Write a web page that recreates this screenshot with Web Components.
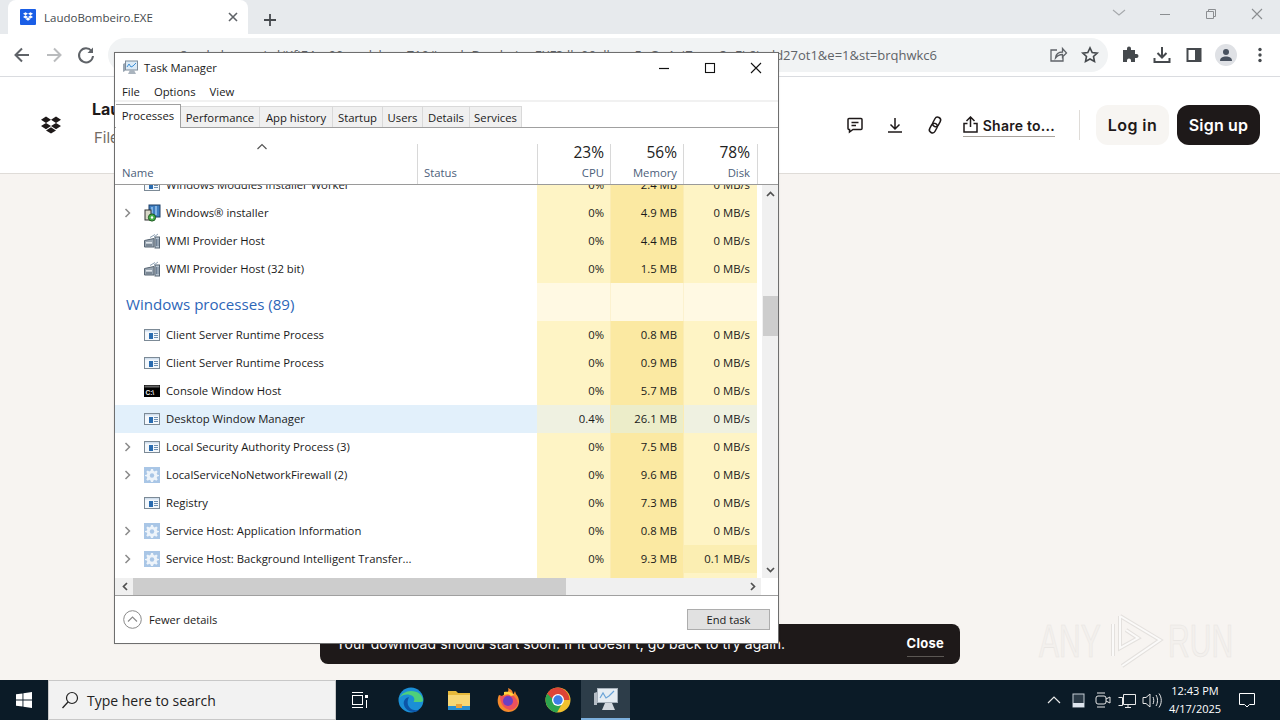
<!DOCTYPE html>
<html>
<head>
<meta charset="utf-8">
<title>LaudoBombeiro.EXE</title>
<style>
    html, body { margin: 0; padding: 0; width: 1280px; height: 720px; overflow: hidden; }
    body { display: flex; flex-direction: column; position: relative; background: #f7f4f1; font-family: "Open Sans", sans-serif; }
</style>
</head>
<body>
<browser-chrome></browser-chrome>
<site-header></site-header>
<page-area></page-area>
<win-taskbar></win-taskbar>
<task-manager>
    <tm-row icon="frame" cpu="0%" mem="2.4 MB" disk="0 MB/s">Windows Modules Installer Worker</tm-row>
    <tm-row icon="installer" expand cpu="0%" mem="4.9 MB" disk="0 MB/s">Windows® installer</tm-row>
    <tm-row icon="wmi" cpu="0%" mem="4.4 MB" disk="0 MB/s">WMI Provider Host</tm-row>
    <tm-row icon="wmi" cpu="0%" mem="1.5 MB" disk="0 MB/s">WMI Provider Host (32 bit)</tm-row>
    <tm-group>Windows processes (89)</tm-group>
    <tm-row icon="frame" cpu="0%" mem="0.8 MB" disk="0 MB/s">Client Server Runtime Process</tm-row>
    <tm-row icon="frame" cpu="0%" mem="0.9 MB" disk="0 MB/s">Client Server Runtime Process</tm-row>
    <tm-row icon="console" cpu="0%" mem="5.7 MB" disk="0 MB/s">Console Window Host</tm-row>
    <tm-row icon="frame" selected cpu="0.4%" mem="26.1 MB" disk="0 MB/s">Desktop Window Manager</tm-row>
    <tm-row icon="frame" expand cpu="0%" mem="7.5 MB" disk="0 MB/s">Local Security Authority Process (3)</tm-row>
    <tm-row icon="gear" expand cpu="0%" mem="9.6 MB" disk="0 MB/s">LocalServiceNoNetworkFirewall (2)</tm-row>
    <tm-row icon="frame" cpu="0%" mem="7.3 MB" disk="0 MB/s">Registry</tm-row>
    <tm-row icon="gear" expand cpu="0%" mem="0.8 MB" disk="0 MB/s">Service Host: Application Information</tm-row>
    <tm-row icon="gear" expand busy cpu="0%" mem="9.3 MB" disk="0.1 MB/s">Service Host: Background Intelligent Transfer...</tm-row>
    <tm-row cpu="" mem="" disk=""></tm-row>
</task-manager>

<script>
const TM_FONT = '"Open Sans", "Noto Sans", sans-serif';

const DROPBOX_PATH = 'M6 1.5 1 4.7l5 3.2 5-3.2zM16 1.5l-5 3.2 5 3.2 5-3.2zM1 11.1l5 3.2 5-3.2-5-3.2zM16 7.9l-5 3.2 5 3.2 5-3.2zM6 15.4l5 3.2 5-3.2-5-3.2z';

const PROC_ICONS = {
    frame: `<svg width="16" height="14" viewBox="0 0 16 14"><rect x=".5" y="1.500" width="15" height="11" fill="#f4f8fc" stroke="#7c8a96"/><rect x="1" y="2" width="14" height="1.500" fill="#cfdeed"/><rect x="5" y="5" width="4" height="6" fill="#2a6cb0"/><path d="M10 5.500h4M10 7.500h4M10 9.500h4" stroke="#6f8fb0"/></svg>`,
    console: `<svg width="16" height="14" viewBox="0 0 16 14"><rect x="0" y="1" width="16" height="12" fill="#000"/><rect x=".5" y="1.500" width="15" height="2" fill="#666"/><text x="1.500" y="10.500" font-family="Liberation Sans, sans-serif" font-size="6.500" font-weight="700" fill="#eee">C:\\</text></svg>`,
    gear: `<svg width="16" height="16" viewBox="0 0 16 16"><rect width="16" height="16" fill="#a9c6e6"/><path d="M7 2h2l.4 1.800 1.300.6 1.600-1 1.400 1.400-1 1.600.6 1.300L15 8v1l-1.700.5-.6 1.300 1 1.600-1.400 1.400-1.600-1-1.300.6L9 15H7l-.4-1.600-1.300-.6-1.600 1-1.400-1.400 1-1.600-.6-1.300L1 9V8l1.700-.3.6-1.300-1-1.600 1.400-1.400 1.600 1 1.300-.6z" fill="#eef4fa"/><circle cx="8" cy="8.500" r="2.200" fill="#a9c6e6"/></svg>`,
    wmi: `<svg width="16" height="16" viewBox="0 0 16 16"><path d="M.5 7.500 10 5.500V14H.5z" fill="#9aa6b2" stroke="#566472"/><rect x="2" y="9" width="6" height="1.500" fill="#e2e7ec"/><rect x="2" y="11.500" width="6" height="1" fill="#5d6b78"/><rect x="11" y="4" width="4.500" height="11" fill="#b7c4d0" stroke="#566472"/><path d="M12.500 6v7M14 6v7" stroke="#6f8094"/><path d="M6 4.500l5-3M10 4l4-3" stroke="#8fa2b4" fill="none"/></svg>`,
    installer: `<svg width="17" height="18" viewBox="0 0 17 18"><rect x="5" y="1" width="11" height="12" fill="#3f7fc1" stroke="#1f3f66"/><path d="M8 3v8M12 2v9" stroke="#9cc6ee" stroke-width="1.500"/><rect x="1" y="6" width="6" height="10" fill="#d8d8c8" stroke="#333"/><circle cx="8" cy="13.500" r="3.600" fill="#46b04a" stroke="#1d5a20"/><circle cx="8" cy="13.500" r="1.200" fill="#fff"/></svg>`
};

class BrowserChrome extends HTMLElement {
    constructor() {
        super();
        this.attachShadow({ mode: 'open' });
        this.render();
    }

    render() {
        this.shadowRoot.innerHTML = `
            <style>
                :host { display: block; flex: none; font-family: "Open Sans", sans-serif; }
                .strip { height: 34px; background: #e7eaed; display: flex; align-items: flex-end; padding-left: 8px; position: relative; }
                .tab { width: 240px; height: 34px; box-sizing: border-box; background: #fff; border-radius: 8px 8px 0 0; display: flex; align-items: center; padding: 0 10px 0 12px; gap: 8px; font-size: 11.5px; color: #45494d; }
                .tab span { flex: 1; }
                .plus { margin: 0 0 7px 15px; }
                .win { position: absolute; right: 0; top: 0; height: 30px; display: flex; align-items: center; }
                .win svg { display: block; }
                .toolbar { height: 42px; background: #fff; display: flex; align-items: center; border-bottom: 1px solid #dadce0; box-sizing: content-box; }
                .nav { width: 108px; flex: none; display: flex; align-items: center; gap: 12px; padding-left: 12px; box-sizing: border-box; }
                .omni { width: 1000px; height: 34px; flex: none; box-sizing: border-box; background: #f1f3f4; border-radius: 17px; display: flex; align-items: center; position: relative; }
                .url { width: 829px; overflow: hidden; white-space: nowrap; display: flex; justify-content: flex-end; font-size: 13px; color: #5f6368; }
                .omni .acts { position: absolute; right: 8px; top: 7px; display: flex; gap: 12px; }
                .tools { flex: 1; display: flex; align-items: center; gap: 12px; padding-left: 12px; }
                .avatar { width: 22px; height: 22px; margin-left: -1px; margin-right: 1px; border-radius: 50%; background: #dfe1e5; display: flex; align-items: center; justify-content: center; }
            </style>
            <div class="strip">
                <div class="tab">
                    <svg width="16" height="16" viewBox="0 0 16 16"><rect width="16" height="16" rx="1" fill="#1a5ee6"/><path transform="translate(2.500 2.400) scale(.5)" d="${DROPBOX_PATH}" fill="#fff"/></svg>
                    <span>LaudoBombeiro.EXE</span>
                    <svg width="10" height="10" viewBox="0 0 10 10"><path d="M1 1l8 8M9 1l-8 8" stroke="#5f6368" stroke-width="1.600"/></svg>
                </div>
                <svg class="plus" width="14" height="14" viewBox="0 0 14 14"><path d="M7 1v12M1 7h12" stroke="#45494d" stroke-width="1.800"/></svg>
                <div class="win">
                    <svg width="46" height="30" viewBox="0 0 46 30"><path d="M17 10l6 5 6-5" fill="none" stroke="#a6a9ac" stroke-width="1.100"/></svg>
                    <svg width="46" height="30" viewBox="0 0 46 30"><path d="M18 14.500h10" stroke="#8b8e91"/></svg>
                    <svg width="46" height="30" viewBox="0 0 46 30"><path d="M18.500 11.500h7v7h-7zM20.500 11.500v-2h7v7h-2" fill="none" stroke="#8b8e91"/></svg>
                    <svg width="46" height="30" viewBox="0 0 46 30"><path d="M18 9l10 10M28 9 18 19" stroke="#8b8e91" stroke-width="1.100"/></svg>
                </div>
            </div>
            <div class="toolbar">
                <div class="nav">
                    <svg width="20" height="20" viewBox="0 0 20 20"><path d="M17 10H4M10 3.500 3.500 10l6.500 6.500" fill="none" stroke="#5f6368" stroke-width="2"/></svg>
                    <svg width="20" height="20" viewBox="0 0 20 20"><path d="M3 10h13M10 3.500l6.500 6.500-6.500 6.500" fill="none" stroke="#babcbe" stroke-width="2"/></svg>
                    <svg width="20" height="20" viewBox="0 0 20 20"><path d="M15.500 6A7 7 0 1 0 17 11" fill="none" stroke="#5f6368" stroke-width="2"/><path d="M17 2.500V8h-5.500z" fill="#5f6368"/></svg>
                </div>
                <div class="omni">
                    <div class="url"><span>8ucdcdn.com/cd/KfjE4xv90nmrlvkey=719/LaudoBombeiro.EXE?dl=0&amp;rlkey=5nOv4ojZmqg3nFL6jqdd27ot1&amp;e=1&amp;st=brqhwkc6</span></div>
                    <div class="acts">
                        <svg width="20" height="20" viewBox="0 0 20 20"><path d="M9 5H3v11h12v-4M7.500 13c.5-4 3-6 7-6V3.500l4 4.500-4 4V9.500c-3 0-5 1-7 3.500z" fill="none" stroke="#5f6368" stroke-width="1.300"/></svg>
                        <svg width="20" height="20" viewBox="0 0 20 20"><path d="M10 2.800l2.200 4.700 5 .6-3.700 3.400 1 5-4.500-2.500-4.500 2.500 1-5L2.800 8.100l5-.6z" fill="none" stroke="#45494d" stroke-width="1.600"/></svg>
                    </div>
                </div>
                <div class="tools">
                    <svg width="20" height="20" viewBox="0 0 20 20"><path d="M3 6h4V4.500a2 2 0 0 1 4 0V6h4v4h1.500a2 2 0 0 1 0 4H15v4h-4v-1.500a2 2 0 0 0-4 0V18H3z" fill="#45494d" transform="translate(0 -1)"/></svg>
                    <svg width="20" height="20" viewBox="0 0 20 20"><path d="M10 2v10M5.500 8l4.500 4.500L14.500 8M2.500 13v4h15v-4" fill="none" stroke="#45494d" stroke-width="2"/></svg>
                    <svg width="20" height="20" viewBox="0 0 20 20"><rect x="3.500" y="4" width="13" height="12" fill="none" stroke="#45494d" stroke-width="2"/><rect x="11" y="4" width="6" height="12" fill="#45494d"/></svg>
                    <div class="avatar"><svg width="16" height="16" viewBox="0 0 16 16"><circle cx="8" cy="5" r="3" fill="#49525f"/><path d="M2 14c0-3.500 3-4.500 6-4.500s6 1 6 4.500z" fill="#49525f"/></svg></div>
                    <svg width="20" height="20" viewBox="0 0 20 20"><circle cx="10" cy="4.500" r="1.700" fill="#45494d"/><circle cx="10" cy="10" r="1.700" fill="#45494d"/><circle cx="10" cy="15.500" r="1.700" fill="#45494d"/></svg>
                </div>
            </div>
        `;
    }
}

class SiteHeader extends HTMLElement {
    constructor() {
        super();
        this.attachShadow({ mode: 'open' });
        this.render();
    }

    render() {
        this.shadowRoot.innerHTML = `
            <style>
                :host { display: flex; flex: none; height: 96px; background: #fff; border-bottom: 1px solid #dfdcd8; align-items: center; font-family: Inter, "Liberation Sans", sans-serif; color: #1e1919; }
                .logo { margin-left: 40px; width: 22px; height: 20px; }
                .name { margin: -5px 0 0 30px; display: flex; flex-direction: column; gap: 10px; }
                .name b { font-size: 16px; font-weight: 700; line-height: 20px; }
                .name span { font-size: 15px; color: #736c64; line-height: 18px; margin-left: 2px; }
                .right { margin-left: auto; display: flex; align-items: center; padding-right: 20px; }
                .ic { display: block; width: 20px; height: 20px; margin-right: 20px; }
                .share { display: flex; align-items: center; gap: 5px; font-size: 14px; font-weight: 600; letter-spacing: .25px; border-bottom: 1px solid #a8a39d; height: 22px; margin-left: -2px; }
                .share span { padding-top: 1px; }
                .sep { width: 1px; height: 30px; background: #dfdcd8; margin: 0 16px 0 24px; }
                .btn { height: 40px; box-sizing: border-box; border-radius: 12px; display: flex; align-items: center; justify-content: center; font-size: 16px; font-weight: 600; letter-spacing: .45px; }
                .login { width: 73px; background: #f7f5f2; margin-right: 8px; }
                .signup { width: 83px; background: #1e1919; color: #fff; letter-spacing: .2px; }
            </style>
            <svg class="logo" viewBox="0 0 22 20"><path d="${DROPBOX_PATH}" fill="#1e1919"/></svg>
            <div class="name"><b>LaudoBombeiro.EXE</b><span>File</span></div>
            <div class="right">
                <svg class="ic" viewBox="0 0 20 20"><path d="M3 4.500a1 1 0 0 1 1-1h12a1 1 0 0 1 1 1v9a1 1 0 0 1-1 1H8l-3.500 2.500v-2.500H4a1 1 0 0 1-1-1zM6.500 7.500h7M6.500 10.500h4.500" fill="none" stroke="#1e1919" stroke-width="1.500"/></svg>
                <svg class="ic" viewBox="0 0 20 20"><path d="M10 3v10.500M5.500 9.500l4.500 4.500 4.500-4.500M3 17h14" fill="none" stroke="#1e1919" stroke-width="1.500"/></svg>
                <svg class="ic" viewBox="0 0 20 20"><g transform="rotate(28 10 10)" fill="none" stroke="#1e1919" stroke-width="1.500"><rect x="7" y="1.500" width="6" height="10" rx="3"/><rect x="7" y="8.500" width="6" height="10" rx="3"/></g></svg>
                <div class="share">
                    <svg width="15" height="17" viewBox="0 0 15 17"><path d="M7.500 11V1.500M3.500 5l4-4 4 4M4.500 7.500H1v8.500h13V7.500h-3.500" fill="none" stroke="#1e1919" stroke-width="1.500"/></svg>
                    <span>Share to...</span>
                </div>
                <div class="sep"></div>
                <div class="btn login">Log in</div>
                <div class="btn signup">Sign up</div>
            </div>
        `;
    }
}

class PageArea extends HTMLElement {
    constructor() {
        super();
        this.attachShadow({ mode: 'open' });
        this.render();
    }

    render() {
        this.shadowRoot.innerHTML = `
            <style>
                :host { display: block; flex: 1; background: #f7f4f1; position: relative; font-family: Inter, "Liberation Sans", sans-serif; }
                .toast { position: absolute; left: 320px; top: 450px; width: 640px; height: 40px; box-sizing: border-box; background: #1e1919; border-radius: 8px; color: #fff; display: flex; align-items: center; padding: 0 16px; font-size: 14px; white-space: nowrap; }
                .toast span { letter-spacing: .08px; margin-top: -1px; }
                .toast a { margin: 4px 0 0 auto; font-size: 13px; font-weight: 700; padding-bottom: 5px; border-bottom: 1px solid #5b5753; letter-spacing: .25px; }
                .mark { position: absolute; left: 1039px; top: 436px; display: flex; align-items: center; height: 60px; font-family: "Liberation Sans", sans-serif; font-size: 47px; color: #f3f0ed; -webkit-text-stroke: .6px #e8e5e2; }
                .mark span { display: block; width: 64px; white-space: nowrap; transform: scaleX(.64); transform-origin: left center; }
                .mark svg { margin: 0 2px 0 5px; }
            </style>
            <div class="toast"><span>Your download should start soon. If it doesn't, go back to try again.</span><a>Close</a></div>
            <div class="mark">
                <span>ANY</span>
                <svg width="58" height="60" viewBox="0 0 58 60"><path d="M5 14v32M12 6l40 24-38 26M12 6v32l18-10-12-8" fill="none" stroke="#e4e1de" stroke-width="4"/><path d="M5 14v32M12 6l40 24-38 26M12 6v32l18-10-12-8" fill="none" stroke="#fbfaf9" stroke-width="2"/></svg>
                <span>RUN</span>
            </div>
        `;
    }
}

class TmRow extends HTMLElement {
    connectedCallback() {
        if (this.shadowRoot) return;
        this.attachShadow({ mode: 'open' });
        this.render();
    }

    render() {
        const selected = this.hasAttribute('selected');
        const busy = this.hasAttribute('busy');
        const icon = PROC_ICONS[this.getAttribute('icon')] || '';
        const chevron = this.hasAttribute('expand')
            ? `<svg width="8" height="10" viewBox="0 0 8 10"><path d="M1.500 1l4 4-4 4" fill="none" stroke="#8a8a8a" stroke-width="1.500"/></svg>`
            : '';
        this.shadowRoot.innerHTML = `
            <style>
                :host { display: grid; grid-template-columns: 422px 74px 73px 73px; height: 28px; font-size: 11.3px; color: #1a1a1a; }
                .name { background: ${selected ? '#e2f0fb' : '#fff'}; display: flex; align-items: center; white-space: nowrap; }
                .chev { width: 8px; margin-left: 9px; display: flex; }
                .icon { width: 17px; height: 18px; margin-left: 12px; display: flex; align-items: center; }
                .label { margin: 0 0 2px 5px; }
                .num { display: flex; align-items: center; justify-content: flex-end; padding: 0 6px 2px 0; box-sizing: border-box; white-space: nowrap; }
                .cpu { background: ${selected ? '#eff1e1' : '#fef4c5'}; border-right: 1px solid #fbecb4; }
                .mem { background: ${selected ? '#ecedc9' : '#fbe9a2'}; border-right: 1px solid #fbecb4; }
                .disk { padding-right: 7px; background: ${selected ? '#eff1e1' : busy ? '#fbeeb2' : '#fef4c5'}; }
            </style>
            <div class="name"><span class="chev">${chevron}</span><span class="icon">${icon}</span><span class="label"><slot></slot></span></div>
            <div class="num cpu">${this.getAttribute('cpu') || ''}</div>
            <div class="num mem">${this.getAttribute('mem') || ''}</div>
            <div class="num disk">${this.getAttribute('disk') || ''}</div>
        `;
    }
}

class TmGroup extends HTMLElement {
    constructor() {
        super();
        this.attachShadow({ mode: 'open' });
        this.shadowRoot.innerHTML = `
            <style>
                :host { display: grid; grid-template-columns: 422px 74px 73px 73px; height: 38px; }
                .title { display: flex; align-items: center; padding: 4px 0 0 11px; background: #fff; font-size: 15.1px; color: #2d66b8; white-space: nowrap; }
                .pale { background: #fff9e3; border-right: 1px solid #fcf2cf; }
            </style>
            <div class="title"><slot></slot></div><div class="pale"></div><div class="pale"></div><div class="pale" style="border:0"></div>
        `;
    }
}

class TaskManager extends HTMLElement {
    constructor() {
        super();
        this.attachShadow({ mode: 'open' });
        this.render();
    }

    render() {
        const tabs = ['Performance', 'App history', 'Startup', 'Users', 'Details', 'Services'];
        const tabWidths = [79, 73, 50, 40, 47, 52];
        this.shadowRoot.innerHTML = `
            <style>
                :host { position: absolute; left: 114px; top: 52px; width: 665px; height: 592px; box-sizing: border-box; background: #fff; border: 1px solid #6e6e6e; display: flex; flex-direction: column; font-family: ${TM_FONT}; font-size: 11.3px; color: #1a1a1a; box-shadow: 0 0 2px rgba(0,0,0,.1); }
                .title { height: 29px; display: flex; align-items: center; padding-left: 7px; flex: none; font-size: 11.2px; }
                .title span { margin-left: 6px; }
                .ctl { margin-left: auto; display: flex; }
                .ctl svg { display: block; width: 46px; height: 29px; }
                .menu { display: flex; align-items: center; gap: 14px; padding-left: 7px; flex: none; border-bottom: 2px solid #f1f1f1; box-sizing: content-box; height: 18px; }
                .tabs { height: 26px; padding-left: 1px; display: flex; align-items: flex-end; border-bottom: 1px solid #a0a0a0; box-sizing: border-box; flex: none; }
                .tab { height: 21px; box-sizing: border-box; display: flex; align-items: center; justify-content: center; background: #f0f0f0; border: 1px solid #d9d9d9; border-left: 0; border-bottom: 0; white-space: nowrap; }
                .tab.on { width: 65px; height: 24px; background: #fff; margin-bottom: -1px; border-right: 1px solid #a0a0a0; border-top: 1px solid #a0a0a0; padding-bottom: 3px; }
                .head { height: 57px; display: grid; grid-template-columns: 303px 120px 73px 73px 74px 1fr; grid-template-rows: 56px; border-bottom: 1px solid #9a9a9a; box-sizing: border-box; flex: none; position: relative; }
                .hc { display: flex; flex-direction: column; justify-content: flex-end; align-items: flex-end; padding: 0 6px 3px; margin-top: 16px; border-right: 1px solid #d8d8d8; box-sizing: border-box; color: #4c607a; line-height: 17px; min-height: 0; }
                .hc b { font-weight: 400; font-size: 15.5px; color: #222; line-height: 20px; margin-bottom: 2px; flex: none; }
                .hc.l { align-items: flex-start; padding-left: 6px; }
                .hc.n { padding-left: 7px; }
                .hc:nth-child(5) { padding-right: 7px; }
                .hc:nth-child(6) { border: 0; }
                .caret { position: absolute; left: 141px; top: 15px; }
                .body { flex: none; height: 393px; display: grid; grid-template-columns: 642px 5px 17px; overflow: hidden; }
                .list { overflow: hidden; height: 393px; }
                .list-in { margin-top: -14px; display: flex; flex-direction: column; }
                .vbar { grid-column: 3; background: #f0f0f0; height: 393px; display: flex; flex-direction: column; align-items: center; justify-content: space-between; position: relative; }
                .vthumb { position: absolute; left: 1px; right: 0; top: 111px; height: 40px; background: #cdcdcd; }
                .arrow { height: 17px; display: flex; align-items: center; justify-content: center; }
                .hbar { flex: none; height: 18px; box-sizing: border-box; background: #f0f0f0; display: flex; align-items: center; position: relative; border-bottom: 1px solid #a0a0a0; }
                .hthumb { position: absolute; left: 18px; top: 0; width: 433px; height: 17px; background: #cdcdcd; }
                .hend { position: absolute; right: 0; top: 0; width: 17px; height: 17px; background: #fff; }
                .harrow { position: absolute; top: 0; height: 17px; width: 17px; display: flex; align-items: center; justify-content: center; }
                .foot { flex: 1; display: flex; align-items: center; padding: 0 8px; font-size: 11.1px; }
                .fewer { width: 19px; height: 19px; margin-right: 7px; }
                .end { margin-left: auto; width: 83px; height: 21px; box-sizing: border-box; background: #e1e1e1; border: 1px solid #adadad; display: flex; align-items: center; justify-content: center; }
            </style>
            <div class="title">
                <svg width="16" height="15" viewBox="0 0 16 15"><path d="M1 12V4l2-1v8z" fill="#9aa6b2"/><rect x="3.500" y="1" width="12" height="9" fill="#dbeaf6" stroke="#7d8b99"/><path d="M5 7l2-3 2 3 2-1 3-3" fill="none" stroke="#3d8fd6"/><path d="M6 14h8l-2-4H8z" fill="#aab4be"/></svg>
                <span>Task Manager</span>
                <div class="ctl">
                    <svg viewBox="0 0 46 29"><path d="M19 15.500h10" stroke="#111" stroke-width="1.200"/></svg>
                    <svg viewBox="0 0 46 29"><rect x="19.500" y="10.500" width="9" height="9" fill="none" stroke="#111" stroke-width="1.100"/></svg>
                    <svg viewBox="0 0 46 29"><path d="M19 10l10 10M29 10 19 20" stroke="#111" stroke-width="1.100"/></svg>
                </div>
            </div>
            <div class="menu"><span>File</span><span>Options</span><span>View</span></div>
            <div class="tabs">
                <div class="tab on">Processes</div>
                ${tabs.map((t, i) => `<div class="tab" style="width:${tabWidths[i]}px">${t}</div>`).join('')}
            </div>
            <div class="head">
                <div class="hc l n">Name</div>
                <div class="hc l">Status</div>
                <div class="hc"><b>23%</b>CPU</div>
                <div class="hc"><b>56%</b>Memory</div>
                <div class="hc"><b>78%</b>Disk</div>
                <div class="hc"></div>
                <svg class="caret" width="12" height="7" viewBox="0 0 12 7"><path d="M1.500 6 6 1.500 10.500 6" fill="none" stroke="#555" stroke-width="1.200"/></svg>
            </div>
            <div class="body">
                <div class="list"><div class="list-in"><slot></slot></div></div>
                <div class="vbar">
                    <div class="arrow"><svg width="9" height="6" viewBox="0 0 9 6"><path d="M1 5l3.500-3.500L8 5" fill="none" stroke="#505050" stroke-width="1.700"/></svg></div>
                    <div class="vthumb"></div>
                    <div class="arrow"><svg width="9" height="6" viewBox="0 0 9 6"><path d="M1 1l3.500 3.500L8 1" fill="none" stroke="#505050" stroke-width="1.700"/></svg></div>
                </div>
            </div>
            <div class="hbar">
                <div class="harrow" style="left:1px"><svg width="6" height="9" viewBox="0 0 6 9"><path d="M5 1 1.500 4.500 5 8" fill="none" stroke="#505050" stroke-width="1.700"/></svg></div>
                <div class="hthumb"></div>
                <div class="harrow" style="right:17px"><svg width="6" height="9" viewBox="0 0 6 9"><path d="M1 1l3.500 3.500L1 8" fill="none" stroke="#505050" stroke-width="1.700"/></svg></div>
                <div class="hend"></div>
            </div>
            <div class="foot">
                <svg class="fewer" viewBox="0 0 19 19"><circle cx="9.500" cy="9.500" r="8.800" fill="none" stroke="#8a8a8a"/><path d="M5 11.500l4.500-4.500 4.500 4.500" fill="none" stroke="#8a8a8a" stroke-width="1.100"/></svg>
                <span>Fewer details</span>
                <div class="end">End task</div>
            </div>
        `;
    }
}

class WinTaskbar extends HTMLElement {
    constructor() {
        super();
        this.attachShadow({ mode: 'open' });
        this.render();
    }

    render() {
        this.shadowRoot.innerHTML = `
            <style>
                :host { display: flex; flex: none; height: 40px; background: #0b1b27; align-items: stretch; font-family: "Open Sans", sans-serif; color: #fff; }
                .start { width: 48px; display: flex; align-items: center; justify-content: center; flex: none; }
                .search { width: 288px; flex: none; box-sizing: border-box; background: #f2f2f2; border: 1px solid #c8c8c8; display: flex; align-items: center; gap: 8px; padding-left: 12px; color: #222; font-size: 14px; }
                .apps { display: flex; align-items: stretch; }
                .app { width: 49px; display: flex; align-items: center; justify-content: center; box-sizing: border-box; }
                .app.on { background: #2d3d49; border-bottom: 2px solid #7cb0dd; }
                .tray { margin-left: auto; padding-right: 9px; display: flex; align-items: center; }
                .tray svg { display: block; }
                .clock { width: 50px; white-space: nowrap; display: flex; flex-direction: column; align-items: center; font-size: 11px; line-height: 18px; margin-left: 6px; }
            </style>
            <div class="start"><svg width="16" height="16" viewBox="0 0 16 16"><path d="M0 2.300 6.500 1.400v6.200H0zM7.400 1.300 16 0v7.600H7.400zM0 8.500h6.500v6.100L0 13.700zM7.400 8.500H16V16l-8.600-1.200z" fill="#fff"/></svg></div>
            <div class="search">
                <svg width="18" height="18" viewBox="0 0 18 18"><circle cx="11" cy="7" r="5.500" fill="none" stroke="#222" stroke-width="1.200"/><path d="M7 11l-5.500 6" stroke="#222" stroke-width="1.300"/></svg>
                <span>Type here to search</span>
            </div>
            <div class="apps">
                <div class="app" style="padding-right:2px"><svg width="17" height="18" viewBox="0 0 17 18"><path d="M1 1.500h11M1 16.500h11" stroke="#fff"/><rect x="1.500" y="4.500" width="10" height="9" fill="none" stroke="#fff"/><rect x="14" y="4" width="3" height="3" fill="#fff"/><path d="M15.500 9v8" stroke="#fff"/></svg></div>
                <div class="app" style="padding-left:2px"><svg width="26" height="26" viewBox="0 0 26 26"><circle cx="13" cy="13" r="12.500" fill="#1b8fd6"/><path d="M25 14c0-6-5-10-12-10C8 4 3 7 1.500 11 4 7.500 9 7 12 8c5 1 5 5 3.500 7h3C22 15 25 15 25 14z" fill="#4fd07a"/><path d="M11 10c-4 1-6 4-5 8 1 4 5 7 10 7 2 0 4-1 5-2-3 1-9 0-11-5-1-3 0-6 1-8z" fill="#0c55a8"/></svg></div>
                <div class="app"><svg width="24" height="22" viewBox="0 0 24 22"><path d="M1 2h8l2 2h12v4H1z" fill="#e7b93b"/><rect x="1" y="6" width="22" height="15" fill="#f8d775"/><rect x="1" y="17" width="22" height="4" fill="#2a8fd1"/><rect x="9" y="15" width="6" height="4" fill="#eaa23a"/></svg></div>
                <div class="app"><svg width="24" height="26" viewBox="0 0 24 26"><path d="M3 8C1 12 1 18 5 22c4 4 11 4 15 0 4-4 4-11 0-15l-1-3c-1 2-1 3-2 3 0-3-2-5-5-6 1 3 0 5-3 6-2 1-3 2-3 2-1 0-2-1-3-1z" fill="#f58a2c"/><path d="M4 9c0 6 3 13 10 14 4 0 7-3 8-7-1-5-6-10-11-8-2 1-3 1-7 1z" fill="#e8416b" opacity=".8"/><circle cx="12" cy="14" r="5" fill="#6a3fc4"/><path d="M8 5c4-1 8 0 10 3l-3 1c-2-2-4-2-7-1z" fill="#ffd23f"/></svg></div>
                <div class="app" style="padding-left:2px"><svg width="26" height="26" viewBox="0 0 26 26"><circle cx="13" cy="13" r="12.500" fill="#f2c12e"/><path d="M13 .5A12.500 12.500 0 0 0 2.200 6.800L8 17l5-4h11.500A12.500 12.500 0 0 0 13 .5z" fill="#dd4437"/><path d="M2.200 6.800A12.500 12.500 0 0 0 12 25.500l6-10.500-5 2z" fill="#2da44e"/><circle cx="13" cy="13" r="6" fill="#fff"/><circle cx="13" cy="13" r="4.700" fill="#3d7ee6"/></svg></div>
                <div class="app on"><svg width="26" height="24" viewBox="0 0 26 24"><path d="M1 18V6l3-1v13z" fill="#b4bcc4"/><rect x="4.500" y="1.500" width="20" height="14" fill="#e6edf3" stroke="#a6b0ba"/><path d="M7 11l3-5 3 5 3-2 5-5" fill="none" stroke="#6aa4d8" stroke-width="1.200"/><path d="M9 23h13l-3-7h-7z" fill="#d2d8de"/></svg></div>
            </div>
            <div class="tray">
                <svg width="22" height="40" viewBox="0 0 22 40"><path d="M2 23l6-6 6 6" fill="none" stroke="#e8e8e8" stroke-width="1.200"/></svg>
                <svg width="24" height="40" viewBox="0 0 24 40"><rect x="5" y="14" width="11" height="13" fill="#2b3a46" stroke="#c4ccd4"/><rect x="5" y="23" width="11" height="4" fill="#dfe6ee"/></svg>
                <svg width="24" height="40" viewBox="0 0 24 40"><rect x="4" y="16" width="10" height="8" rx="2" fill="none" stroke="#e8e8e8"/><path d="M14 19l4-2v6l-4-2M5 13h8M5 27h8" fill="none" stroke="#e8e8e8"/></svg>
                <svg width="24" height="40" viewBox="0 0 24 40"><path d="M7.500 14.500h12v10h-12zM2.500 17.500h4v8h-4M9 27.500h6M12 24.500v3" fill="none" stroke="#e8e8e8"/></svg>
                <svg width="24" height="40" viewBox="0 0 24 40"><path d="M3 17.500h3l4-3.500v13l-4-3.500H3zM13 17c1 2 1 5 0 7M16 15c2 3 2 8 0 11M19 13.500c3 4 3 10 0 14" fill="none" stroke="#e8e8e8"/></svg>
                <div class="clock"><span>12:43 PM</span><span>4/17/2025</span></div>
                <svg width="48" height="40" viewBox="0 0 48 40" style="margin-left:3px"><path d="M16.500 13.500h15v11h-5l-2.500 2.500-2.500-2.500h-5z" fill="none" stroke="#fff"/></svg>
            </div>
        `;
    }
}

customElements.define('browser-chrome', BrowserChrome);
customElements.define('site-header', SiteHeader);
customElements.define('page-area', PageArea);
customElements.define('tm-row', TmRow);
customElements.define('tm-group', TmGroup);
customElements.define('task-manager', TaskManager);
customElements.define('win-taskbar', WinTaskbar);
</script>
</body>
</html>
